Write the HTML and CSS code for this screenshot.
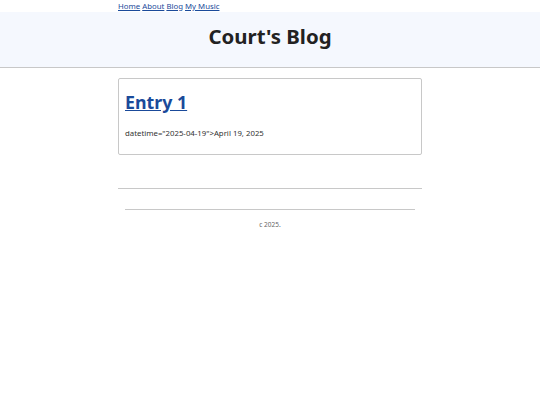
FILE: index.html
```html
<!DOCTYPE html>
<html>
<head>
<meta charset="utf-8">
<link rel="stylesheet" href="styles.css">
</head>
<body>
<nav class="nav"><a href="#">Home</a> <a href="#">About</a> <a href="#">Blog</a> <a href="#">My Music</a></nav>
<header class="header"><h1 class="title">Court's Blog</h1></header>
<main class="main">
  <article class="card">
    <h2 class="entry-title"><a href="#">Entry 1</a></h2>
    <p class="date">datetime="2025-04-19"&gt;April 19, 2025</p>
  </article>
  <hr class="rule">
  <footer class="footer">
    <hr class="footer-rule">
    <p class="copy">c 2025.</p>
  </footer>
</main>
</body>
</html>
```
FILE: styles.css
```css
html, body { margin: 0; padding: 0; background: #fff; }
body { font-family: "Noto Sans", "Open Sans", sans-serif; color: #222; }
.nav { width: 304px; margin: 0 auto; font-size: 7.8px; line-height: 12px; height: 12px; }
.nav a { color: #1a4a9a; }
.header { background: #f5f8fe; border-bottom: 1px solid #c8c8c8; height: 45px; padding-top: 10px; text-align: center; }
.title { margin: 0; font-size: 20.4px; line-height: 28px; font-weight: 700; color: #222; }
.main { width: 304px; margin: 0 auto; padding-top: 10px; }
.card { border: 1px solid #c8c8c8; border-radius: 2px; padding: 11px 6px 16px; height: 48px; }
.entry-title { margin: 0; font-size: 17.8px; line-height: 24px; font-weight: 700; }
.entry-title a { color: #1a4a9a; }
.date { margin: 13px 0 0; font-size: 7.8px; line-height: 12px; color: #333; }
.rule { border: 0; border-top: 1px solid #c8c8c8; margin: 33px 0 0; }
.footer { padding: 0 7px; }
.footer-rule { border: 0; border-top: 1px solid #c8c8c8; margin: 20px 0 0; }
.copy { margin: 10px 0 0; text-align: center; font-size: 6.5px; color: #666; }
```
